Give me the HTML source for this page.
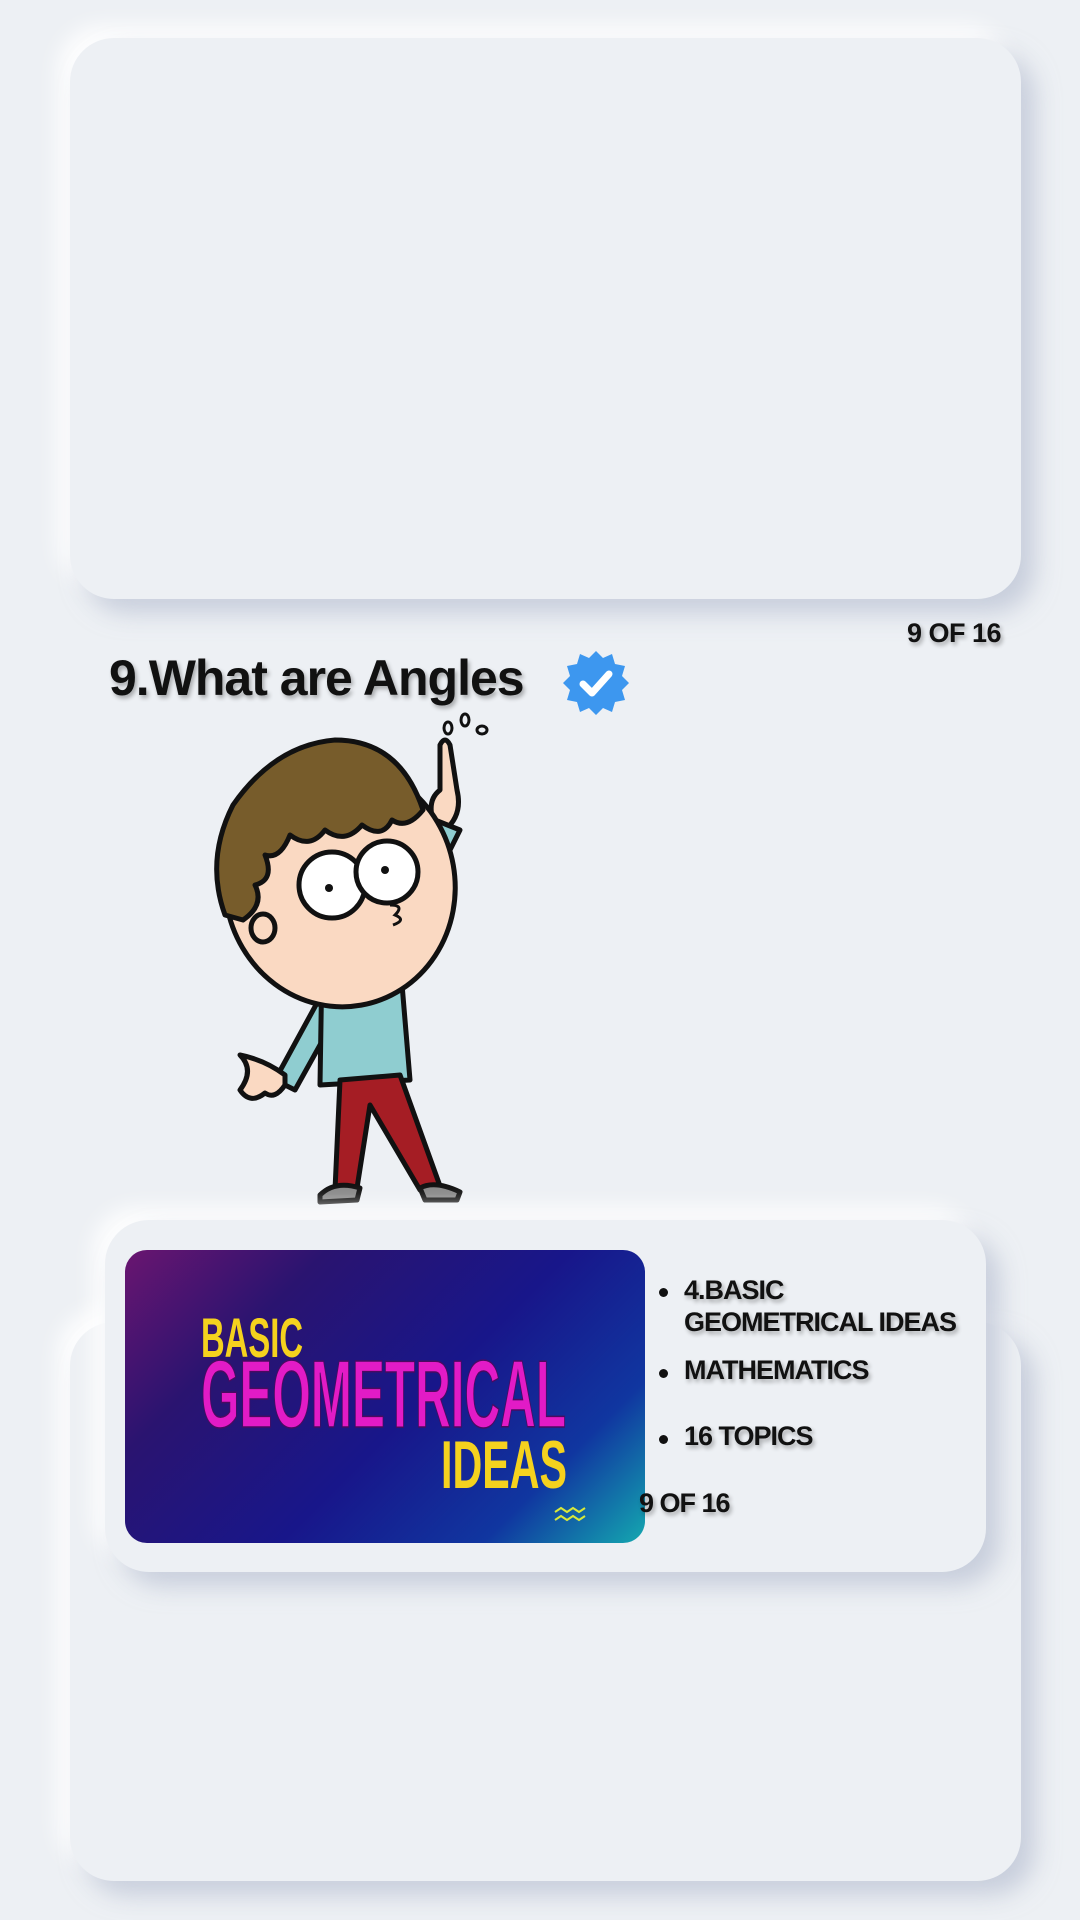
<!DOCTYPE html>
<html><head><meta charset="utf-8"><style>
*{margin:0;padding:0;box-sizing:border-box}
body{width:1080px;height:1920px;background:#edf0f4;position:relative;overflow:hidden;font-family:"Liberation Sans",sans-serif}
.card{position:absolute;background:#edf0f4;border-radius:44px;box-shadow:14px 14px 24px rgba(170,178,200,.55),-12px -12px 22px rgba(255,255,255,.95)}
.t{position:absolute;font-weight:bold;color:#111;text-shadow:2px 3px 4px rgba(0,0,0,.3);white-space:nowrap}
.b{position:absolute;font-weight:bold;font-size:27px;color:#111;text-shadow:2px 3px 4px rgba(0,0,0,.3);letter-spacing:-1px;white-space:nowrap}
.dot{position:absolute;width:9px;height:9px;border-radius:50%;background:#111}
</style></head><body>
<div class="card" style="left:70px;top:38px;width:951px;height:561px"></div>
<div class="t" style="right:79px;top:618px;font-size:27px;letter-spacing:-.5px">9 OF 16</div>
<div class="t" style="left:109px;top:649px;font-size:50px;letter-spacing:-1px">9.What are Angles</div>
<svg style="position:absolute;left:562px;top:649px" width="68" height="68" viewBox="0 0 68 68">
<polygon fill="#3d97ef" points="34,2 41,9 50,5 53,15 63,17 60,27 67,34 60,41 63,51 53,53 50,63 41,59 34,66 27,59 18,63 15,53 5,51 8,41 1,34 8,27 5,17 15,15 18,5 27,9"/>
<path d="M21 35 L30 44 L47 25" stroke="#fff" stroke-width="7" fill="none" stroke-linecap="round" stroke-linejoin="round"/></svg>
<svg style="position:absolute;left:195px;top:710px" width="300" height="500" viewBox="0 0 300 500">
<g stroke="#111" stroke-width="5" stroke-linejoin="round" stroke-linecap="round">
<path d="M250 120 Q268 105 262 80 L255 35 Q250 25 245 35 L245 80 Q232 90 238 110 Z" fill="#fad9c2"/>
<path d="M140 260 L80 370 L100 380 L150 290 Z" fill="#8fcdd0"/>
<path d="M90 365 Q70 350 45 345 Q60 360 45 380 Q55 395 70 383 Q80 390 90 375 Z" fill="#fad9c2"/>
<path d="M127 250 L125 375 L215 370 L205 250 Z" fill="#8fcdd0"/>
<path d="M200 250 L240 170 L265 120 L240 110 L205 190 Z" fill="#8fcdd0"/>
<path d="M145 370 L140 480 L162 478 L175 395 L225 480 L245 476 L205 365 Z" fill="#a51d24"/>
<path d="M125 485 Q140 470 165 478 L162 490 L125 492 Z" fill="#888"/>
<path d="M225 478 Q240 470 265 482 L262 490 L230 490 Z" fill="#888"/>
<ellipse cx="145" cy="175" rx="115" ry="122" fill="#fad9c2" transform="rotate(-10 145 175)"/>
<path d="M30 205 Q10 150 38 95 Q80 35 140 30 Q205 30 228 100 Q212 120 197 110 Q187 130 167 115 Q150 135 130 120 Q115 140 95 125 Q85 150 70 145 Q80 170 60 175 Q70 195 48 210 Z" fill="#775c2b"/>
<circle cx="137" cy="175" r="33" fill="#fff"/>
<circle cx="192" cy="162" r="31" fill="#fff"/>
<ellipse cx="68" cy="218" rx="12" ry="14" fill="#fad9c2"/>
</g>
<circle cx="134" cy="178" r="4" fill="#111"/><circle cx="190" cy="160" r="4" fill="#111"/>
<path d="M195 195 Q210 195 200 205 Q212 210 198 215" stroke="#111" stroke-width="3" fill="none"/>
<g fill="none" stroke="#111" stroke-width="3"><ellipse cx="253" cy="18" rx="4" ry="6"/><ellipse cx="270" cy="10" rx="4" ry="6"/><ellipse cx="287" cy="20" rx="5" ry="4"/></g>
</svg>
<div class="card" style="left:70px;top:1322px;width:951px;height:559px"></div>
<div class="card" style="left:105px;top:1220px;width:881px;height:352px"></div>
<div style="position:absolute;left:125px;top:1250px;width:520px;height:293px;border-radius:22px;overflow:hidden;background:linear-gradient(135deg,#6a1570 0%,#2a1470 25%,#18168a 55%,#1036a0 80%,#14a8b0 100%)">
<svg width="520" height="293" viewBox="0 0 520 293" style="position:absolute;left:0;top:0">
<g font-family="Liberation Sans Narrow,Liberation Sans,sans-serif" font-weight="bold">
<text x="76" y="107" font-size="56" fill="#f5d21e" textLength="102" lengthAdjust="spacingAndGlyphs">BASIC</text>
<text x="76" y="177" font-size="96" fill="#e21bc6" stroke="#4a0a60" stroke-width="1.5" textLength="365" lengthAdjust="spacingAndGlyphs">GEOMETRICAL</text>
<text x="316" y="238" font-size="68" fill="#f5d21e" textLength="126" lengthAdjust="spacingAndGlyphs">IDEAS</text>
</g>
<path d="M430 262 l6 -4 6 4 6 -4 6 4 6 -4 M430 270 l6 -4 6 4 6 -4 6 4 6 -4" stroke="#d8e83a" stroke-width="2" fill="none"/>
</svg></div>
<div class="dot" style="left:659px;top:1288px"></div>
<div class="b" style="left:684px;top:1274px;line-height:32px">4.BASIC<br>GEOMETRICAL IDEAS</div>
<div class="dot" style="left:659px;top:1369px"></div>
<div class="b" style="left:684px;top:1355px">MATHEMATICS</div>
<div class="dot" style="left:659px;top:1435px"></div>
<div class="b" style="left:684px;top:1421px">16 TOPICS</div>
<div class="b" style="left:639px;top:1488px">9 OF 16</div>
</body></html>
